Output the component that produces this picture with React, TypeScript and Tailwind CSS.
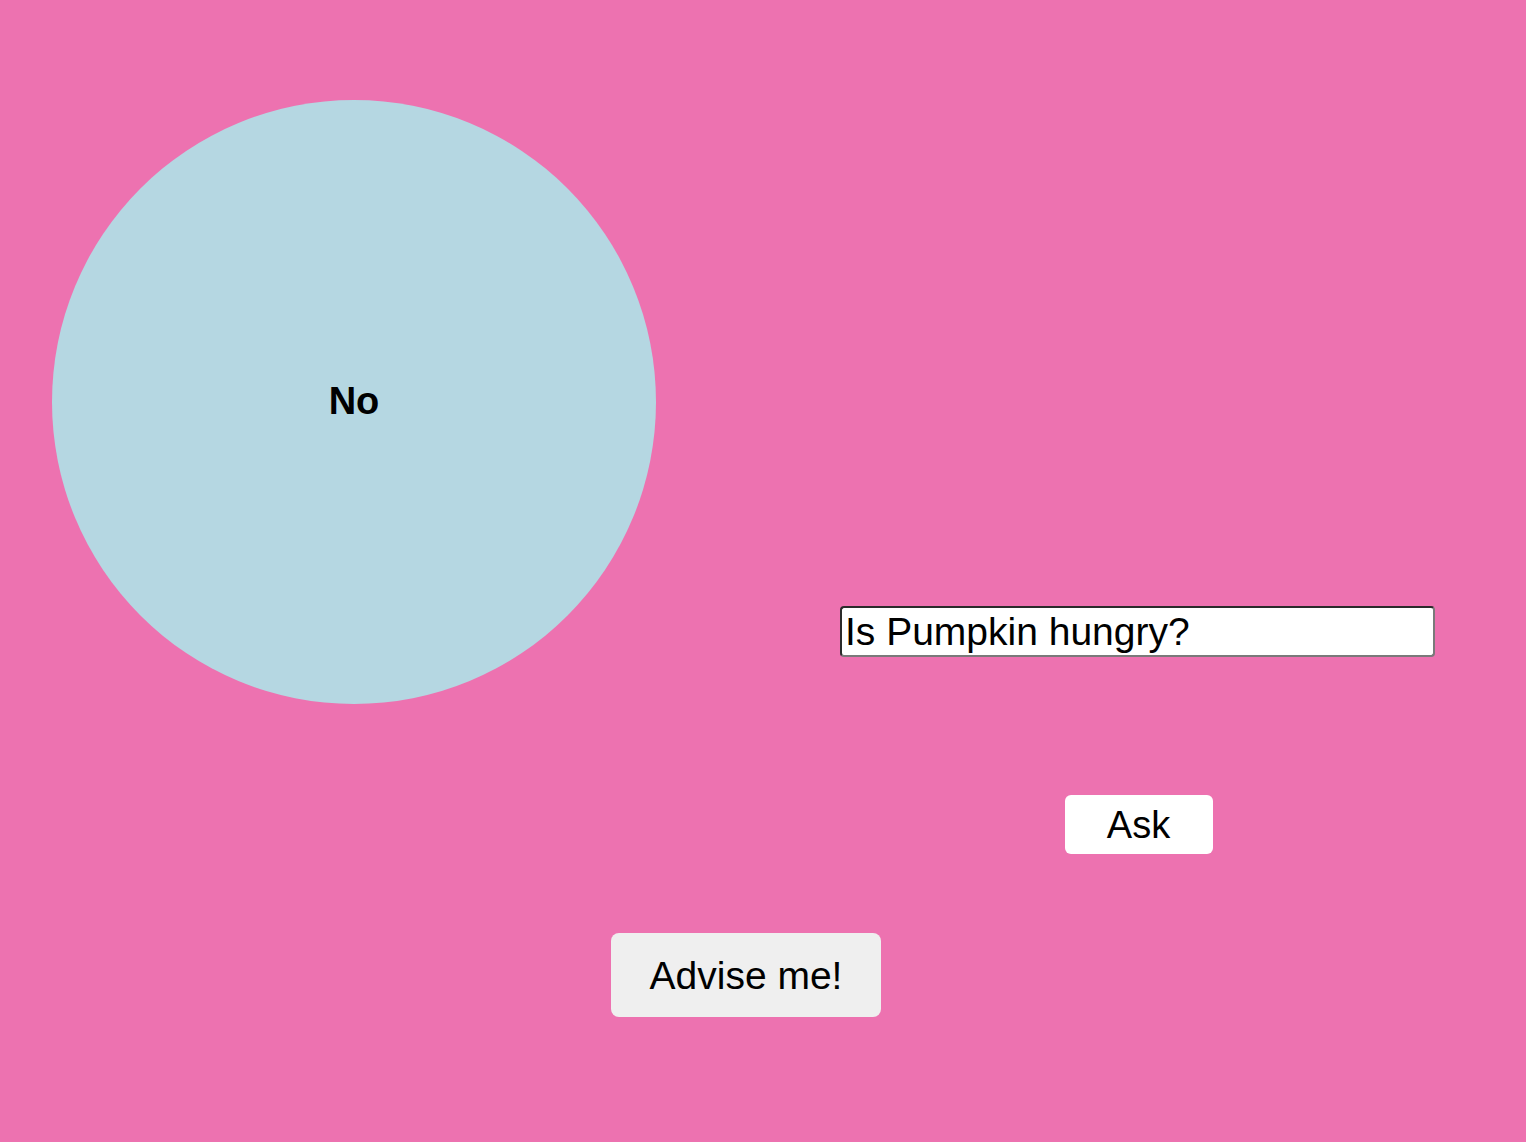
export default function App() {
  return (
    <main
      className="min-h-screen bg-[#ed72b0] pl-[52px] pt-[100px] text-black"
      style={{ fontFamily: '"Liberation Sans", Arial, sans-serif' }}
    >
      <div className="flex items-start">
        <div className="flex h-[604px] w-[604px] shrink-0 items-center justify-center rounded-full bg-[#b5d7e2]">
          <span className="-mt-[2px] text-[38px] font-bold leading-none">No</span>
        </div>

        <div className="ml-[184px] flex flex-col items-center pt-[506px]">
          <input
            type="text"
            defaultValue="Is Pumpkin hungry?"
            className="h-[51px] w-[595px] rounded-[4px] border-2 border-t-[#2b2b2b] border-l-[#2b2b2b] border-r-[#7a7a7a] border-b-[#7a7a7a] bg-white px-[3px] text-[39px] leading-none text-black outline-none"
          />
          <button
            type="button"
            className="ml-[2px] mt-[138px] h-[59px] w-[148px] rounded-[6px] bg-white text-[38px] leading-none"
          >
            Ask
          </button>
        </div>
      </div>

      <div className="ml-[559px] mt-[79px] pb-[125px]">
        <button
          type="button"
          className="h-[84px] w-[270px] rounded-[8px] bg-[#efefef] text-[39px] leading-none"
        >
          Advise me!
        </button>
      </div>
    </main>
  );
}
